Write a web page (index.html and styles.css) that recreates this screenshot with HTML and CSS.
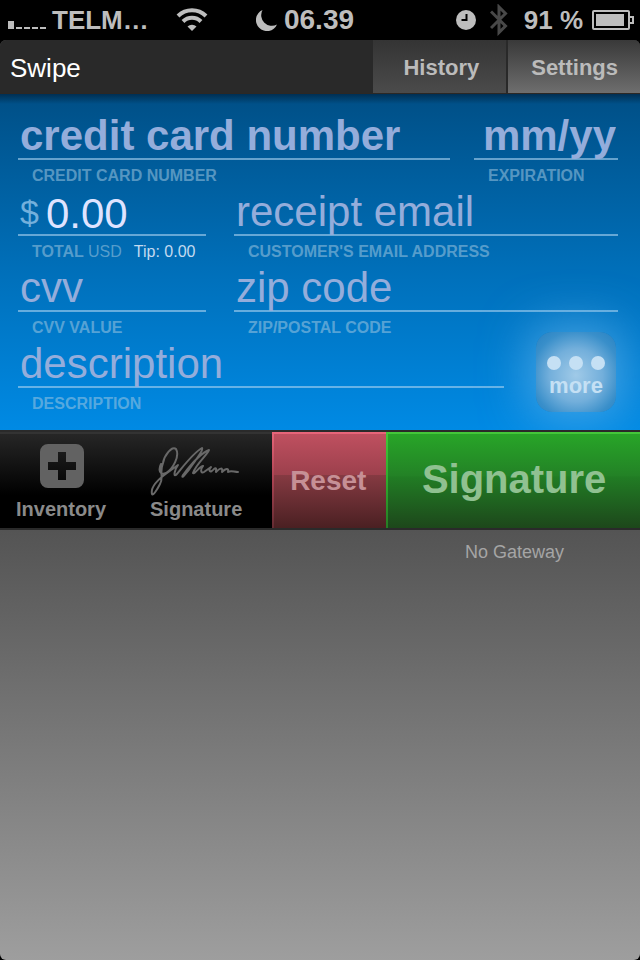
FILE: index.html
```html
<!DOCTYPE html>
<html lang="en">
<head>
<meta charset="utf-8">
<meta name="viewport" content="width=device-width, initial-scale=1">
<title>Swipe</title>
<link rel="stylesheet" href="styles.css">
</head>
<body>
<div class="status">
  <div class="status-side">
    <svg class="signal" width="40" height="10" viewBox="0 0 40 10" aria-hidden="true"><path d="M0 1h6v8H0zM8 7h6v2H8zM16 7h6v2h-6zM24 7h6v2h-6zM32 7h6v2h-6z"/></svg>
    <span>TELM…</span>
    <svg class="wifi" width="32" height="24" viewBox="0 0 32 24" aria-hidden="true"><path d="M16 23l-4.500-4.500a6.500 6.500 0 0 1 9 0z"/><path class="arc" d="M2 8a20 20 0 0 1 28 0M7 13.500a12.600 12.600 0 0 1 18 0"/></svg>
  </div>
  <div class="status-time">
    <svg width="22" height="22" viewBox="0 0 22 22" aria-hidden="true"><path d="M6.500 1A11 11 0 1 0 21 15.500A10.700 10.700 0 0 1 6.500 1Z"/></svg>
    <span>06.39</span>
  </div>
  <div class="status-side status-end">
    <svg width="20" height="20" viewBox="0 0 20 20" aria-hidden="true"><circle cx="10" cy="10" r="10"/><path class="hand" d="M10.500 4v6H5.500"/></svg>
    <svg class="bluetooth" width="18" height="32" viewBox="0 0 18 32" aria-hidden="true"><path d="M1 7.500l14.500 14.500-6.500 6.500V3l6.500 6.500L1 24"/></svg>
    <span>91 %</span>
    <svg class="battery" width="42" height="20" viewBox="0 0 42 20" aria-hidden="true"><rect class="shell" x="1" y="1" width="36" height="18" rx="1"/><path d="M4 4h28v12H4z"/><path class="shell" d="M38 7h3v6h-3"/></svg>
  </div>
</div>
<main class="app">
  <header class="bar">
    <h1>Swipe</h1>
    <nav>
      <a href="#history">History</a>
      <a class="active" href="#settings">Settings</a>
    </nav>
  </header>
  <form id="charge">
    <div class="row card-row">
      <div class="field strong"><input id="card" type="text" placeholder="credit card number"><label for="card">CREDIT CARD NUMBER</label></div>
      <div class="field strong expiry"><input id="exp" type="text" placeholder="mm/yy"><label for="exp">EXPIRATION</label></div>
    </div>
    <div class="row pair-row">
      <div class="field">
        <div class="amount"><span class="dollar">$</span><input id="total" type="text" value="0.00"></div>
        <div class="caption"><label for="total">TOTAL <span class="unit">USD</span></label><span class="tip">Tip: 0.00</span></div>
      </div>
      <div class="field"><input id="email" type="email" placeholder="receipt email"><label for="email">CUSTOMER'S EMAIL ADDRESS</label></div>
    </div>
    <div class="row pair-row">
      <div class="field"><input id="cvv" type="text" placeholder="cvv"><label for="cvv">CVV VALUE</label></div>
      <div class="field"><input id="zip" type="text" placeholder="zip code"><label for="zip">ZIP/POSTAL CODE</label></div>
    </div>
    <div class="row more-row">
      <div class="field"><input id="desc" type="text" placeholder="description"><label for="desc">DESCRIPTION</label></div>
      <button class="more" type="button">
        <svg width="58" height="14" viewBox="0 0 58 14" aria-hidden="true"><circle cx="7" cy="7" r="7"/><circle cx="29" cy="7" r="7"/><circle cx="51" cy="7" r="7"/></svg>
        more
      </button>
    </div>
  </form>
  <div class="toolbar">
    <div class="tools">
      <button class="tool" type="button">
        <svg width="88" height="52" viewBox="0 0 88 52" aria-hidden="true"><path fill-rule="evenodd" d="M31 0h28a8 8 0 0 1 8 8v28a8 8 0 0 1-8 8H31a8 8 0 0 1-8-8V8a8 8 0 0 1 8-8zM41 8v10H31v8h10v10h8V26h10v-8H49V8z"/></svg>
        Inventory
      </button>
      <button class="tool" type="button">
        <svg class="scribble" width="92" height="52" viewBox="0 0 92 52" aria-hidden="true"><path d="M11 20C8 26 10 32 16 29C23 25 30 12 26 5C22 1 14 12 13 19C9 28 14 34 10 40C7 46 3 52 2 50C0 42 10 34 17 29L28 21C25 25 23 33 26 31C32 24 43 9 52 4C54 6 44 18 38 27C34 32 31 35 33 31C39 23 51 9 59 6C59 9 46 20 43 29C44 31 51 21 53 22C50 26 51 30 54 28L61 23C58 26 60 30 64 25C67 23 66 26 66 28C70 24 73 23 72 28C76 24 79 24 78 28C81 26 84 28 88 28"/></svg>
        Signature
      </button>
    </div>
    <button class="reset" type="reset" form="charge">Reset</button>
    <button class="sign" type="submit" form="charge">Signature</button>
  </div>
  <p class="gateway">No Gateway</p>
</main>
</body>
</html>
```
FILE: styles.css
```css
* { box-sizing: border-box; }

body {
  margin: 0;
  min-height: 100vh;
  display: flex;
  flex-direction: column;
  background: #000;
  font-family: "Liberation Sans", Arial, sans-serif;
}

button, input { font: inherit; border: 0; margin: 0; padding: 0; }
button { cursor: pointer; }

.status {
  height: 40px;
  padding: 0 6px 0 8px;
  display: grid;
  grid-template-columns: 1fr auto 1fr;
  align-items: center;
  color: #bdbdbd;
  fill: #bdbdbd;
  font-size: 26px;
  font-weight: bold;
}
.status-side, .status-time { display: flex; align-items: center; }
.status-time { gap: 6px; padding-right: 32px; font-size: 28px; }
.status-end { justify-content: flex-end; }
.signal { margin: 10px 4px 0 0; }
.wifi { margin-left: 27px; }
.arc { fill: none; stroke: #bdbdbd; stroke-width: 4; }
.hand { fill: none; stroke: #000; stroke-width: 2; }
.bluetooth { margin: 0 16px 0 14px; fill: none; stroke: #484848; stroke-width: 3; }
.battery { margin-left: 9px; }
.shell { fill: none; stroke: #bdbdbd; stroke-width: 2; }

.app {
  flex: 1;
  border-radius: 6px;
  overflow: hidden;
  background: linear-gradient(#545454 490px, #9e9e9e);
}

.bar {
  height: 54px;
  display: flex;
  justify-content: space-between;
  background: #292929;
  border-bottom: 1px solid #2c2825;
}
.bar h1 {
  margin: 0;
  padding-left: 10px;
  color: #fff;
  font-size: 26px;
  font-weight: normal;
  line-height: 56px;
}
.bar nav { display: flex; gap: 2px; }
.bar a {
  padding: 0 27px 0 30px;
  color: #bbb;
  background: linear-gradient(#343434, #4b4b4b);
  font-size: 22px;
  font-weight: bold;
  line-height: 56px;
  text-decoration: none;
}
.bar a.active { padding: 0 22px 0 23px; background: linear-gradient(#393939, #6e6e6e); }

form {
  padding: 22px 22px 10px 18px;
  background:
    linear-gradient(rgba(0, 20, 40, .55), rgba(0, 20, 40, 0) 10px),
    linear-gradient(#004f86, #006fb9 52%, #008ae4);
}
.row { display: grid; }
.card-row { grid-template-columns: 3fr 1fr; column-gap: 24px; }
.pair-row { grid-template-columns: 188fr 384fr; column-gap: 28px; }
.more-row { grid-template-columns: 1fr 80px; column-gap: 32px; padding-right: 2px; }

.field { min-width: 0; display: flex; flex-direction: column; }
.field > input, .amount {
  width: 100%;
  height: 44px;
  padding: 0 2px 4px;
  color: #dfe3ff;
  background: linear-gradient(rgba(170, 210, 240, .6), rgba(170, 210, 240, .6)) bottom / 100% 2px no-repeat;
  font-size: 42px;
  outline: 0;
}
.field input::placeholder { color: #94addb; opacity: 1; }
.strong > input { font-weight: bold; }
.expiry > input { text-align: right; }
.amount { display: flex; align-items: center; gap: 7px; padding-bottom: 0; }
.amount input { flex: 1; min-width: 0; color: inherit; background: none; outline: 0; }
.dollar { padding-bottom: 4px; color: #73b0dc; font-size: 34px; }

label, .caption {
  padding-left: 14px;
  color: rgba(160, 200, 225, .55);
  font-size: 16px;
  font-weight: bold;
  line-height: 32px;
  white-space: nowrap;
}
.caption { display: flex; gap: 12px; }
.caption label { padding: 0; }
.unit { font-weight: normal; }
.tip { color: #c3daf0; font-weight: normal; }

.more {
  height: 80px;
  margin: -12px 0 8px;
  padding-top: 14px;
  display: flex;
  flex-direction: column;
  align-items: center;
  justify-content: center;
  border-radius: 16px;
  color: #c5e0f4;
  fill: #c5e0f4;
  background: radial-gradient(circle at 50% 54%, #a0cae8, #73afdb 45%, #398fca 75%, #2781c2);
  box-shadow: 0 0 48px 6px rgba(120, 190, 240, .6);
  font-size: 22px;
  font-weight: bold;
  line-height: 32px;
}

.toolbar {
  position: relative;
  display: flex;
  height: 100px;
  border: solid #2a2a2a;
  border-width: 2px 0;
}
.tools {
  display: flex;
  gap: 44px;
  padding: 0 30px 0 16px;
  border-top: 2px solid #333;
  background: linear-gradient(#262626, #000 65%);
}
.tool {
  padding-top: 10px;
  display: flex;
  flex-direction: column;
  align-items: center;
  color: #8a8a8a;
  fill: #626262;
  background: none;
  font-size: 20px;
  font-weight: bold;
  line-height: 26px;
}
.scribble { fill: none; stroke: #686868; stroke-width: 2; stroke-linejoin: round; stroke-linecap: round; }

.reset, .sign { font-weight: bold; border: solid; border-width: 2px 0 0 2px; }
.reset {
  width: 114px;
  padding: 0 4px 0 0;
  color: #c69096;
  background: linear-gradient(#bf5060, #9c404c 44%, #853a42 44%, #4a2022);
  border-image: linear-gradient(#e8667a, #b04454 45%, #602a30) 2;
  font-size: 28px;
}
.sign {
  flex: 1;
  padding-bottom: 4px;
  color: #90c191;
  background: linear-gradient(#28a528, #238226 44%, #217c24 46%, #1d471b);
  border-image: linear-gradient(#44c83a, #2fab2d 50%, #267a24) 2;
  font-size: 40px;
}

.gateway {
  margin: 0;
  padding: 12px 76px 0 0;
  color: #a5a5a5;
  font-size: 18px;
  line-height: 20px;
  text-align: right;
}
```
